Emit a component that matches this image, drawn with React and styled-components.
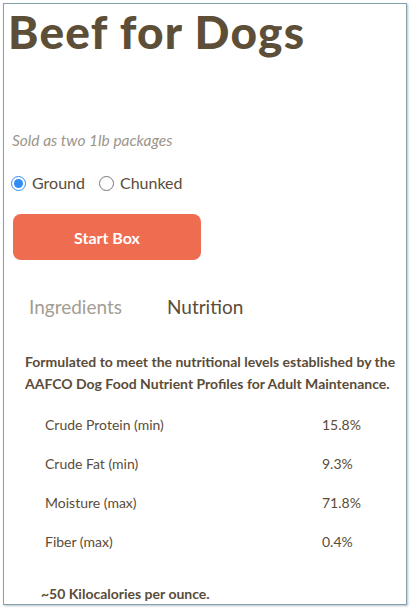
import React, { useState } from 'react';
import styled, { createGlobalStyle } from 'styled-components';

const GlobalStyle = createGlobalStyle`
  * { box-sizing: border-box; }
  body {
    margin: 0;
    background: #ffffff;
    font-family: Lato, "Open Sans", sans-serif;
  }
`;

const nutrients = [
  { label: 'Crude Protein (min)', value: '15.8%' },
  { label: 'Crude Fat (min)', value: '9.3%' },
  { label: 'Moisture (max)', value: '71.8%' },
  { label: 'Fiber (max)', value: '0.4%' },
];

const App = () => {
  const [cut, setCut] = useState('ground');
  const [tab, setTab] = useState('nutrition');

  return (
    <Page>
      <GlobalStyle />
      <Frame>
        <Title>Beef for Dogs</Title>
        <Note>Sold as two 1lb packages</Note>
        <RadioRow>
          <RadioLabel>
            <Radio type="radio" name="cut" checked={cut === 'ground'} onChange={() => setCut('ground')} />
            Ground
          </RadioLabel>
          <RadioLabel>
            <Radio type="radio" name="cut" checked={cut === 'chunked'} onChange={() => setCut('chunked')} />
            Chunked
          </RadioLabel>
        </RadioRow>
        <StartButton>Start Box</StartButton>
        <Tabs>
          <Tab active={tab === 'ingredients'} onClick={() => setTab('ingredients')}>
            Ingredients
          </Tab>
          <Tab active={tab === 'nutrition'} onClick={() => setTab('nutrition')}>
            Nutrition
          </Tab>
        </Tabs>
        <Statement>
          Formulated to meet the nutritional levels established by the AAFCO Dog Food Nutrient Profiles for
          Adult Maintenance.
        </Statement>
        <Table>
          {nutrients.map((n) => (
            <Row key={n.label}>
              <span>{n.label}</span>
              <span>{n.value}</span>
            </Row>
          ))}
        </Table>
        <Calories>~50 Kilocalories per ounce.</Calories>
      </Frame>
    </Page>
  );
};

const Page = styled.div`
  width: 411px;
  height: 610px;
  padding: 3px 4px 5px 3px;
`;

const Frame = styled.div`
  height: 100%;
  border: 1px solid #86a1ae;
  box-shadow: 1px 1px 2px rgba(90, 120, 135, 0.45);
  overflow: hidden;
  display: flex;
  flex-direction: column;
  padding: 0 0 0 1px;
  color: #5a4c39;
`;

const Title = styled.h1`
  margin: 4px 0 0 3px;
  font-family: Lato, sans-serif;
  font-weight: 900;
  font-size: 46px;
  line-height: 48px;
  letter-spacing: 1.2px;
  color: #5c4e37;
  white-space: nowrap;
`;

const Note = styled.p`
  margin: 74px 0 0 7px;
  font-style: italic;
  font-size: 15.5px;
  line-height: 20px;
  color: #9b948b;
`;

const RadioRow = styled.div`
  display: flex;
  gap: 14px;
  margin: 23px 0 0 6px;
`;

const RadioLabel = styled.label`
  display: flex;
  align-items: center;
  gap: 6px;
  font-size: 16px;
  line-height: 20px;
  color: #5a4c39;
`;

const Radio = styled.input`
  margin: 0;
  width: 15px;
  height: 15px;
  accent-color: #2f8ef4;
`;

const StartButton = styled.button`
  margin: 21px 0 0 8px;
  width: 188px;
  height: 49px;
  border: none;
  border-radius: 8px;
  background: #ee6c4f;
  color: #ffffff;
  font-family: Lato, sans-serif;
  font-weight: 700;
  font-size: 16px;
`;

const Tabs = styled.div`
  display: flex;
  gap: 45px;
  margin: 35px 0 0 24px;
`;

const Tab = styled.button`
  padding: 0;
  border: none;
  background: none;
  font-family: Lato, sans-serif;
  font-size: 19px;
  line-height: 24px;
  color: ${({ active }) => (active ? '#5a4c39' : '#a39d95')};
  cursor: pointer;
`;

const Statement = styled.p`
  margin: 32px 0 0 20px;
  font-weight: 700;
  font-size: 14px;
  line-height: 22px;
  color: #5a4c39;
`;

const Table = styled.div`
  display: flex;
  flex-direction: column;
  gap: 19px;
  margin: 20px 0 0 40px;
`;

const Row = styled.div`
  display: grid;
  grid-template-columns: 277px auto;
  font-size: 14px;
  line-height: 20px;
  color: #5a4c39;
`;

const Calories = styled.p`
  margin: 32px 0 0 36px;
  font-weight: 700;
  font-size: 14px;
  line-height: 20px;
  color: #5a4c39;
`;

export default App;
